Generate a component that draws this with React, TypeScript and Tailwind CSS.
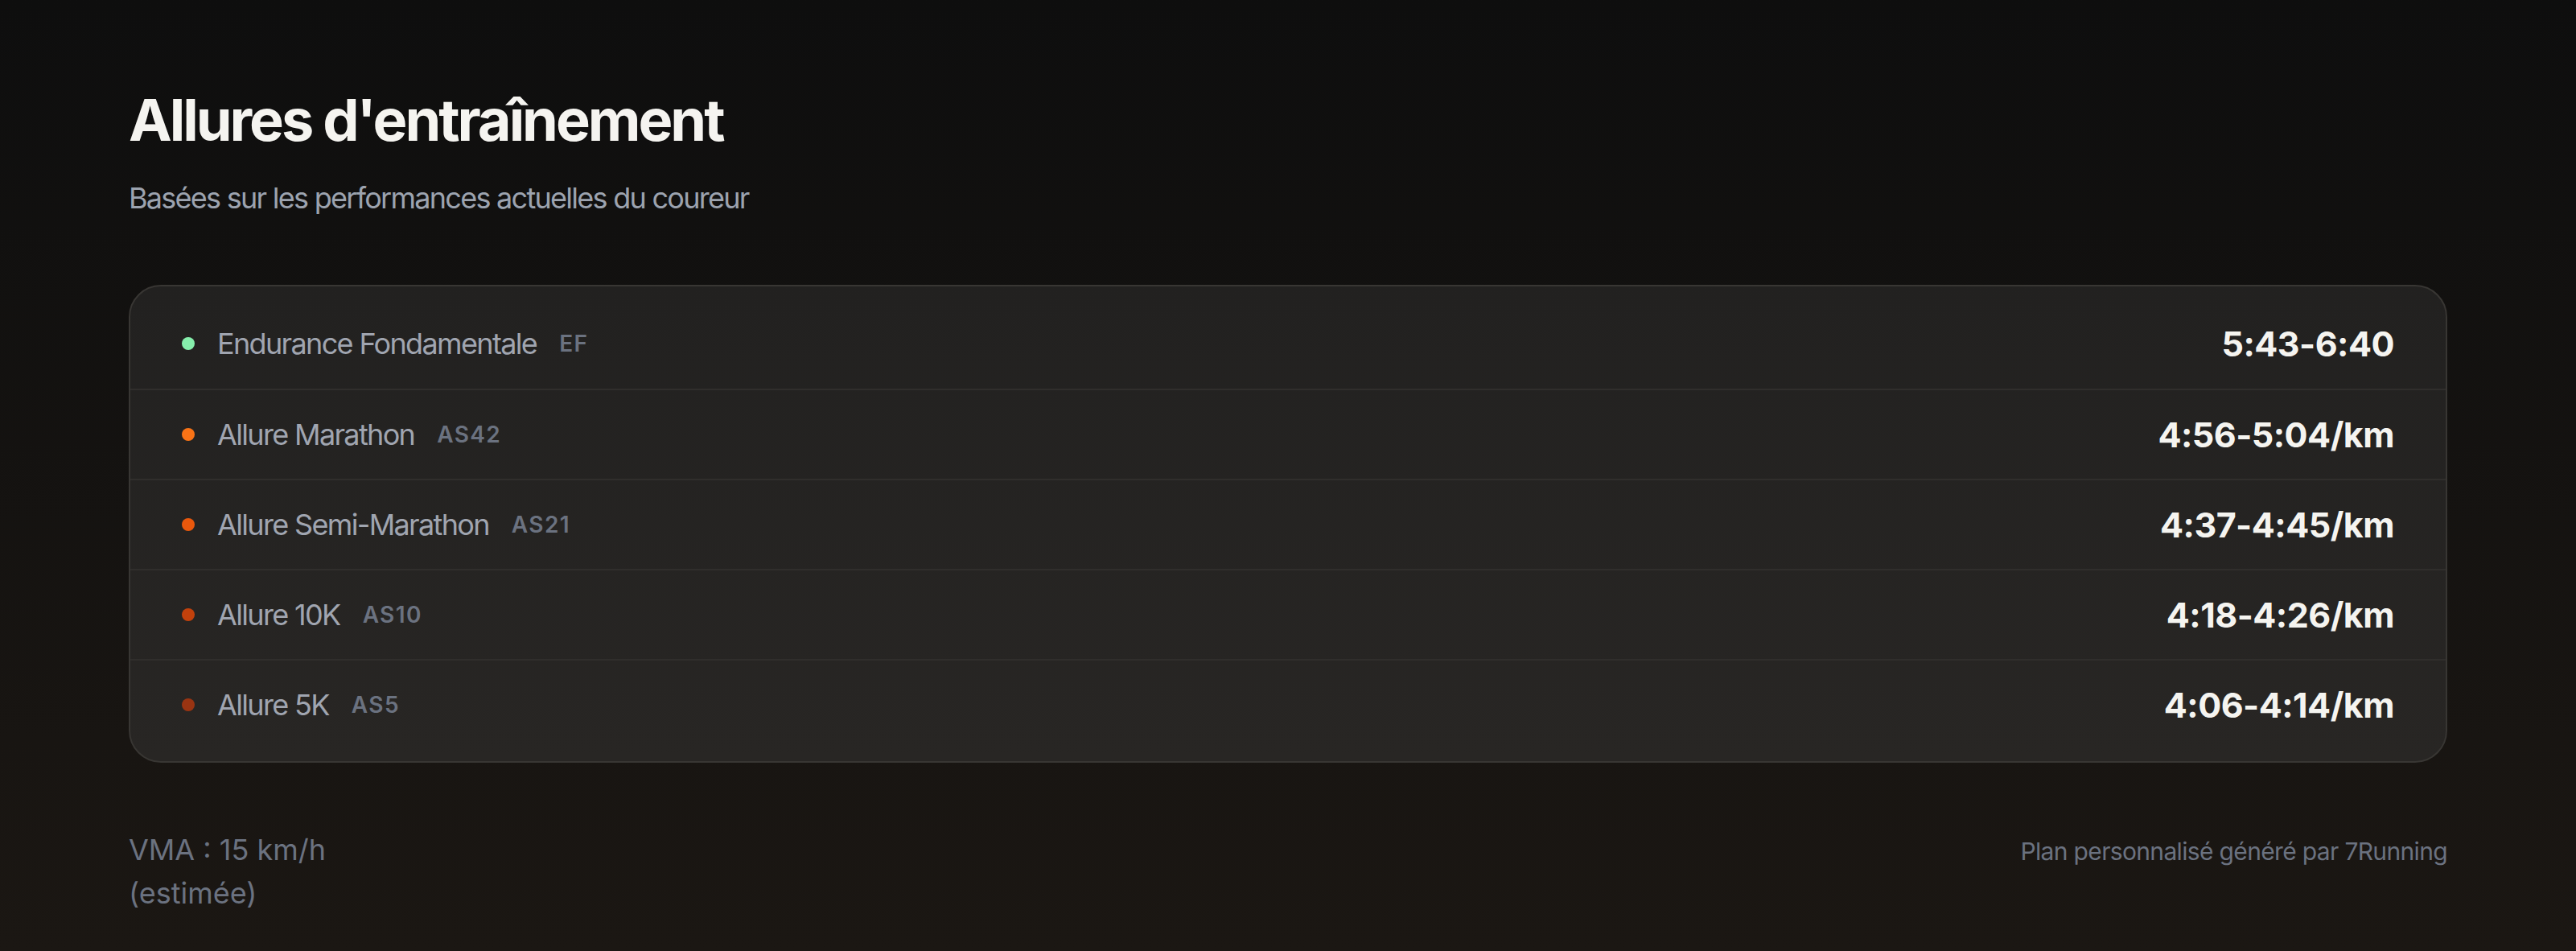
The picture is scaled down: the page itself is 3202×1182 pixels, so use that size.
const paces = [
  { label: 'Endurance Fondamentale', code: 'EF', value: '5:43-6:40', dot: 'bg-[#86efac]' },
  { label: 'Allure Marathon', code: 'AS42', value: '4:56-5:04/km', dot: 'bg-[#f97316]' },
  { label: 'Allure Semi-Marathon', code: 'AS21', value: '4:37-4:45/km', dot: 'bg-[#ea580c]' },
  { label: 'Allure 10K', code: 'AS10', value: '4:18-4:26/km', dot: 'bg-[#c2410c]' },
  { label: 'Allure 5K', code: 'AS5', value: '4:06-4:14/km', dot: 'bg-[#9a3412]' },
];

export default function App() {
  return (
    <div className="min-h-screen bg-gradient-to-b from-[#0e0e0e] to-[#1b1713] px-[160px] pt-[109px] pb-[44px] font-['Inter',sans-serif]">
      <h1 className="text-[72px] leading-[80px] font-bold tracking-[-0.042em] text-[#f5f4f0]">
        Allures d'entraînement
      </h1>
      <p className="mt-[29px] text-[36px] leading-[56px] tracking-[-0.048em] text-[#9ca3af]">
        Basées sur les performances actuelles du coureur
      </p>

      <div className="mt-[80px] rounded-[40px] border-2 border-[#383633] bg-gradient-to-b from-[#222120] to-[#282624] py-[15px]">
        {paces.map((p, i) => (
          <div
            key={p.code}
            className={`flex h-[112px] items-center justify-between px-[64px] ${
              i > 0 ? 'border-t-2 border-[#302e2c]' : ''
            }`}
          >
            <div className="flex items-center gap-[28px]">
              <span className={`h-[16px] w-[16px] rounded-full ${p.dot}`} />
              <span className="text-[36px] leading-[56px] tracking-[-0.046em] text-[#a0a5b0]">{p.label}</span>
              <span className="text-[28px] font-semibold tracking-[0.05em] text-[#6b7280]">{p.code}</span>
            </div>
            <span className="text-[43px] font-bold leading-[56px] tracking-[-0.012em] text-[#f5f4f0]">
              {p.value}
            </span>
          </div>
        ))}
      </div>

      <div className="mt-[81px] flex items-baseline justify-between">
        <p className="max-w-[320px] text-[36px] leading-[54px] text-[#6b7280]">
          VMA : 15 km/h (estimée)
        </p>
        <p className="text-[30px] leading-[44px] tracking-[-0.022em] text-[#6b7280]">
          Plan personnalisé généré par 7Running
        </p>
      </div>
    </div>
  );
}
